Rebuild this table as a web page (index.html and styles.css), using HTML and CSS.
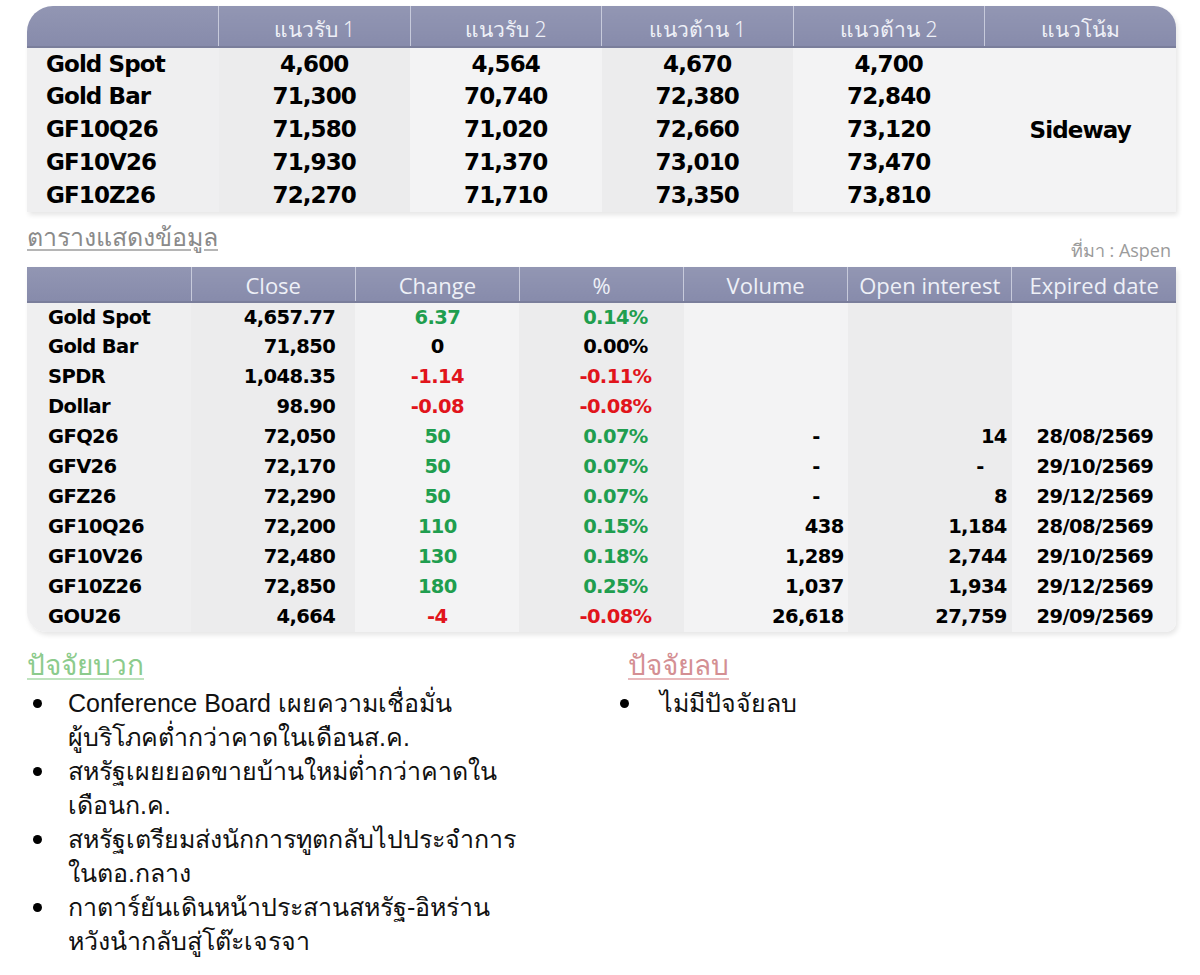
FILE: index.html
```html
<!DOCTYPE html>
<html lang="th">
<head>
<meta charset="utf-8">
<title>Gold</title>
<link rel="stylesheet" href="styles.css">
</head>
<body>
<div class="page">
  <div class="card card-top">
    <table class="t1">
      <thead>
        <tr>
          <th></th><th>แนวรับ 1</th><th>แนวรับ 2</th><th>แนวต้าน 1</th><th>แนวต้าน 2</th><th>แนวโน้ม</th>
        </tr>
      </thead>
      <tbody>
        <tr><td class="name">Gold Spot</td><td>4,600</td><td>4,564</td><td>4,670</td><td>4,700</td><td class="trend" rowspan="5">Sideway</td></tr>
        <tr><td class="name">Gold Bar</td><td>71,300</td><td>70,740</td><td>72,380</td><td>72,840</td></tr>
        <tr><td class="name">GF10Q26</td><td>71,580</td><td>71,020</td><td>72,660</td><td>73,120</td></tr>
        <tr><td class="name">GF10V26</td><td>71,930</td><td>71,370</td><td>73,010</td><td>73,470</td></tr>
        <tr><td class="name">GF10Z26</td><td>72,270</td><td>71,710</td><td>73,350</td><td>73,810</td></tr>
      </tbody>
    </table>
  </div>

  <div class="caption-row">
    <h2 class="section-title">ตารางแสดงข้อมูล</h2>
    <span class="source">ที่มา : Aspen</span>
  </div>

  <div class="card card-bottom">
    <table class="t2">
      <thead>
        <tr>
          <th></th><th>Close</th><th>Change</th><th>%</th><th>Volume</th><th>Open interest</th><th>Expired date</th>
        </tr>
      </thead>
      <tbody>
        <tr><td class="name">Gold Spot</td><td class="r">4,657.77</td><td class="c up">6.37</td><td class="c up">0.14%</td><td class="r"></td><td class="r"></td><td class="c"></td></tr>
        <tr><td class="name">Gold Bar</td><td class="r">71,850</td><td class="c">0</td><td class="c">0.00%</td><td class="r"></td><td class="r"></td><td class="c"></td></tr>
        <tr><td class="name">SPDR</td><td class="r">1,048.35</td><td class="c down">-1.14</td><td class="c down">-0.11%</td><td class="r"></td><td class="r"></td><td class="c"></td></tr>
        <tr><td class="name">Dollar</td><td class="r">98.90</td><td class="c down">-0.08</td><td class="c down">-0.08%</td><td class="r"></td><td class="r"></td><td class="c"></td></tr>
        <tr><td class="name">GFQ26</td><td class="r">72,050</td><td class="c up">50</td><td class="c up">0.07%</td><td class="r dash">-</td><td class="r">14</td><td class="c">28/08/2569</td></tr>
        <tr><td class="name">GFV26</td><td class="r">72,170</td><td class="c up">50</td><td class="c up">0.07%</td><td class="r dash">-</td><td class="r dash">-</td><td class="c">29/10/2569</td></tr>
        <tr><td class="name">GFZ26</td><td class="r">72,290</td><td class="c up">50</td><td class="c up">0.07%</td><td class="r dash">-</td><td class="r">8</td><td class="c">29/12/2569</td></tr>
        <tr><td class="name">GF10Q26</td><td class="r">72,200</td><td class="c up">110</td><td class="c up">0.15%</td><td class="r">438</td><td class="r">1,184</td><td class="c">28/08/2569</td></tr>
        <tr><td class="name">GF10V26</td><td class="r">72,480</td><td class="c up">130</td><td class="c up">0.18%</td><td class="r">1,289</td><td class="r">2,744</td><td class="c">29/10/2569</td></tr>
        <tr><td class="name">GF10Z26</td><td class="r">72,850</td><td class="c up">180</td><td class="c up">0.25%</td><td class="r">1,037</td><td class="r">1,934</td><td class="c">29/12/2569</td></tr>
        <tr><td class="name">GOU26</td><td class="r">4,664</td><td class="c down">-4</td><td class="c down">-0.08%</td><td class="r">26,618</td><td class="r">27,759</td><td class="c">29/09/2569</td></tr>
      </tbody>
    </table>
  </div>

  <div class="factors">
    <section class="factor plus">
      <h3 class="factor-title">ปัจจัยบวก</h3>
      <ul class="bullets">
        <li><span class="txt">Conference Board เผยความเชื่อมั่น<br>ผู้บริโภคต่ำกว่าคาดในเดือนส.ค.</span></li>
        <li><span class="txt">สหรัฐเผยยอดขายบ้านใหม่ต่ำกว่าคาดใน<br>เดือนก.ค.</span></li>
        <li><span class="txt">สหรัฐเตรียมส่งนักการทูตกลับไปประจำการ<br>ในตอ.กลาง</span></li>
        <li><span class="txt">กาตาร์ยันเดินหน้าประสานสหรัฐ-อิหร่าน<br>หวังนำกลับสู่โต๊ะเจรจา</span></li>
      </ul>
    </section>
    <section class="factor minus">
      <h3 class="factor-title">ปัจจัยลบ</h3>
      <ul class="bullets">
        <li><span class="txt">ไม่มีปัจจัยลบ</span></li>
      </ul>
    </section>
  </div>
</div>
</body>
</html>
```

FILE: styles.css
```css
* { box-sizing: border-box; }
html, body { margin: 0; padding: 0; background: #ffffff; }
body { font-family: "Liberation Sans", Arial, sans-serif; color: #000; }

.page {
  width: 1200px;
  padding: 6px 24px 0 27px;
}

.card {
  width: 1149px;
  box-shadow: 2px 3px 5px rgba(0,0,0,0.10);
  overflow: hidden;
}
.card-top { border-radius: 26px 22px 0 0; }
.card-bottom { border-radius: 0 0 10px 20px; }

table {
  width: 100%;
  border-collapse: collapse;
  table-layout: fixed;
}

th {
  background: linear-gradient(#9296b3, #878bab);
  color: #eef0f7;
  font-weight: normal;
  border-left: 1px solid #c7cadb;
  border-bottom: 2px solid #7a7e9b;
  padding: 0;
}
th:first-child { border-left: none; }

td {
  padding: 0;
  font-family: "DejaVu Sans", "Liberation Sans", sans-serif;
  font-weight: bold;
  white-space: nowrap;
  color: #000;
}
tbody td:nth-child(odd) { background: #f3f3f4; }
tbody td:nth-child(even) { background: #ececed; }
tbody td:first-child { background: #efeff0; }

/* top table */
.t1 th {
  height: 41px;
  padding-top: 6px;
  font-family: "Noto Sans", "DejaVu Sans", sans-serif;
  font-size: 21px;
  font-weight: 300;
}
.t1 td {
  height: 33px;
  font-size: 23px;
  letter-spacing: -0.9px;
  text-align: center;
  line-height: 1;
}
.t1 td.name { text-align: left; padding-left: 19px; }
.t1 td.trend { background: #f3f3f4; }

/* caption */
.caption-row {
  display: flex;
  justify-content: space-between;
  height: 55px;
}
.section-title {
  margin: 8px 0 0 0;
  font-family: "Noto Sans", "DejaVu Sans", sans-serif;
  font-weight: 300;
  font-size: 25px;
  line-height: 32px;
  color: #8a8a8a;
  text-decoration: underline;
  text-underline-offset: 3px;
  text-decoration-color: #b5b5b5;
}
.source {
  font-family: "Open Sans", "Noto Sans", sans-serif;
  font-size: 18px;
  line-height: 24px;
  color: #9b9b9b;
  margin: 26px 5px 0 0;
}

/* bottom table */
.t2 th {
  height: 35px;
  padding-top: 2px;
  font-family: "Open Sans", "Noto Sans", sans-serif;
  font-size: 22px;
  font-weight: 400;
}
.t2 td {
  height: 30px;
  font-size: 19.5px;
  letter-spacing: -0.6px;
  line-height: 1;
}
.t2 td.name { padding-left: 21px; }
.t2 td.r { text-align: right; padding-right: 20px; }
.t2 td.c { text-align: center; }
.t2 td:nth-child(4) { padding-left: 28px; }
.t2 td:nth-child(5) { padding-right: 4px; }
.t2 td:nth-child(6) { padding-right: 5px; }
.t2 td:nth-child(7) { padding-left: 2px; }
.t2 td.dash { padding-right: 28px; }
.up { color: #1f9e4f !important; }
.down { color: #e1141b !important; }

/* factors */
.factors {
  display: flex;
  margin-top: 16px;
}
.factor.plus { width: 601px; }
.factor.minus { width: 548px; }
.factor-title {
  margin: 0 0 6px 0;
  font-family: "Noto Sans", "DejaVu Sans", sans-serif;
  font-weight: 300;
  font-size: 28px;
  line-height: 32px;
  text-decoration: underline;
  text-underline-offset: 3px;
}
.plus .factor-title { color: #8ccb8c; text-decoration-color: #bfe3bf; }
.minus .factor-title { color: #d48f93; text-decoration-color: #e8b9bc; }

.bullets {
  list-style: none;
  margin: 0;
  padding: 0;
}
.bullets li {
  display: flex;
  font-family: "Liberation Sans", "Noto Sans", sans-serif;
  font-size: 25px;
  line-height: 34px;
  color: #111;
}
.bullets li::before {
  content: "";
  flex: 0 0 9px;
  height: 9px;
  border-radius: 50%;
  background: #000;
  margin: 13px 26px 0 6px;
}
.txt { white-space: nowrap; }
.minus .bullets { margin-left: -14px; }
.minus .bullets li::before { margin-right: 31px; }
```
